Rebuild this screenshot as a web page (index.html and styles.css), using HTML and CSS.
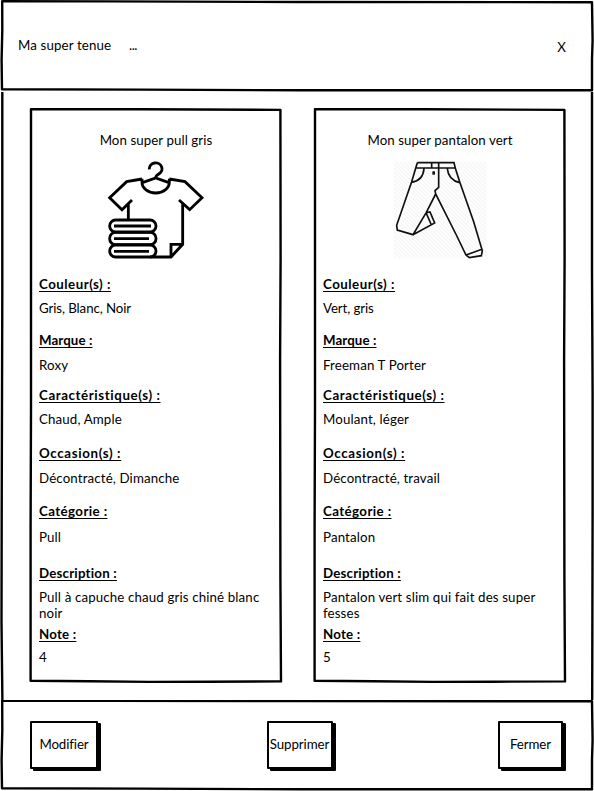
FILE: index.html
```html
<!DOCTYPE html>
<html lang="fr">
<head>
<meta charset="utf-8">
<title>Ma super tenue</title>
<link rel="stylesheet" href="styles.css">
</head>
<body>
<div class="window">
  <header class="header">
    <svg class="sketch" viewBox="0 0 594 92" aria-hidden="true"><path d="M2.2 1.2L107 1.4L300 2L592 2.2L592.6 40L592 60L592 90.3L300 90.3L140 89.6L2 89.2L1.6 60L2.3 30Z"/></svg>
    <h1 class="title">Ma super tenue</h1>
    <span class="more">...</span>
    <span class="close">X</span>
  </header>

  <main class="cards">
    <svg class="sketch" viewBox="0 0 594 608" aria-hidden="true"><path d="M2.3 0L2.3 200L1.7 420L1.5 530L2.4 608M592 0L592 180L592.6 300L592.6 420L592.2 608"/></svg>
    <article class="card">
      <svg class="sketch" viewBox="0 0 254 576" aria-hidden="true"><path d="M2 1.1L110 1.3L251.4 1.9L251.6 150L251.1 250L251.4 470L252 573.4L180 573.7L120 573.9L60 573.3L1.6 572.8L1.6 420L2 300Z"/></svg>
      <h2 class="name">Mon super pull gris</h2>
      <svg class="picture top" viewBox="0 0 360 330" role="img">
        <path d="M163 43A19 18 0 1 1 190 58Q182 62 182 70M142 83L182 69L222 83M141 71V82A41 32 0 0 0 223 82V71M141 72L95 80L44 128L81 164L111 135M100 148V192M223 72L270 80L321 128L284 164L252 135M263 148V268L228 306H165M228 306V268H263"/>
        <rect x="44" y="195" width="139" height="36" rx="18"/>
        <rect x="44" y="232" width="139" height="37" rx="18"/>
        <rect x="44" y="270" width="139" height="36" rx="18"/>
        <path d="M57 213H168M57 251H162M57 289H162"/>
      </svg>
      <dl class="details">
        <dt class="color">Couleur(s) :</dt><dd>Gris, Blanc, Noir</dd>
        <dt class="brand">Marque :</dt><dd>Roxy</dd>
        <dt class="features">Caractéristique(s) :</dt><dd>Chaud, Ample</dd>
        <dt class="occasion">Occasion(s) :</dt><dd>Décontracté, Dimanche</dd>
        <dt class="category">Catégorie :</dt><dd>Pull</dd>
        <dt class="description">Description :</dt><dd>Pull à capuche chaud gris chiné blanc<br>noir</dd>
        <dt class="rating">Note :</dt><dd>4</dd>
      </dl>
    </article>
    <article class="card">
      <svg class="sketch" viewBox="0 0 254 576" aria-hidden="true"><path d="M2 1.1L110 1.3L251.4 1.9L251.6 150L251.1 250L251.4 470L252 573.4L180 573.7L120 573.9L60 573.3L1.6 572.8L1.6 420L2 300Z"/></svg>
      <h2 class="name">Mon super pantalon vert</h2>
      <svg class="picture pants" viewBox="0 0 330 330" role="img">
        <defs><pattern id="hatch" width="12" height="12" patternUnits="userSpaceOnUse"><path class="hatch" d="M0 0L12 12"/></pattern></defs>
        <rect class="paper" x="27" y="20" width="277" height="290"/>
        <rect class="weave" x="27" y="20" width="277" height="290"/>
        <path d="M97 23H207L211 40L225 83L266 200L292 287L289 302L253 308L243 300L214 240L152 117L150 107L161 97V25M97 23L92 40L80 80L35 211L37 225L84 239L124 172L152 117M92 39H211M140 24V38M117 41Q114 77 80 82M187 41Q190 75 224 83M124 173L135 171L149 204L84 239M124 175L138 207M243 300L291 283"/>
        <path class="button-dot" d="M146 49V59"/>
      </svg>
      <dl class="details">
        <dt class="color">Couleur(s) :</dt><dd>Vert, gris</dd>
        <dt class="brand">Marque :</dt><dd>Freeman T Porter</dd>
        <dt class="features">Caractéristique(s) :</dt><dd>Moulant, léger</dd>
        <dt class="occasion">Occasion(s) :</dt><dd>Décontracté, travail</dd>
        <dt class="category">Catégorie :</dt><dd>Pantalon</dd>
        <dt class="description">Description :</dt><dd>Pantalon vert slim qui fait des super<br>fesses</dd>
        <dt class="rating">Note :</dt><dd>5</dd>
      </dl>
    </article>
  </main>

  <footer class="footer">
    <svg class="sketch" viewBox="0 0 594 91" aria-hidden="true"><path d="M2.2 .7L107 .8L300 1L592 1.3L592.6 40L592 60L592 89.3L300 89.3L140 88.6L2 88.2L1.6 60L2.3 30Z"/></svg>
    <button class="button edit">Modifier</button>
    <button class="button delete">Supprimer</button>
    <button class="button dismiss">Fermer</button>
  </footer>
</div>
</body>
</html>
```
FILE: styles.css
```css
* { box-sizing: border-box; }

body {
  margin: 0;
  background: #fff;
  color: #000;
  font: 13.3px/16px Lato, "Open Sans", sans-serif;
  letter-spacing: 0.13px;
}

.window {
  width: 594px;
  height: 791px;
  display: flex;
  flex-direction: column;
  overflow: hidden;
}

.sketch {
  position: absolute;
  inset: 0;
  width: 100%;
  height: 100%;
  fill: none;
  stroke: #000;
  stroke-width: 2.4;
  stroke-linejoin: round;
  pointer-events: none;
}

.header {
  position: relative;
  height: 92px;
  padding: 0 28px 2px 18px;
  display: flex;
  align-items: center;
}

.title, .name {
  margin: 0;
  font-size: inherit;
  font-weight: 400;
}

.title { width: 111px; }
.more { letter-spacing: -0.5px; }
.close { margin-left: auto; padding-top: 3px; }

.cards {
  position: relative;
  height: 608px;
  padding: 16px 27px 0 29px;
  display: flex;
  gap: 30px;
}

.card {
  position: relative;
  width: 254px;
  height: 576px;
  padding: 24px 10px 0;
}

.name {
  text-align: center;
  letter-spacing: 0.07px;
}

.picture {
  display: block;
  height: 110px;
  margin: 7px auto 11px;
  fill: none;
  stroke: #000;
}

.top {
  width: 120px;
  margin-left: 56px;
  stroke-width: 8.5;
}

.pants { width: 110px; stroke: #111; stroke-width: 5; }
.pants .paper { fill: #fdfdfd; stroke: none; }
.pants .weave { fill: url(#hatch); stroke: none; }
.pants .hatch { stroke: #f0f0f0; stroke-width: 2; }
.pants .button-dot { stroke-width: 8; }

.details { margin: 0; }

dt {
  font-weight: 700;
  text-decoration: underline 1px;
  text-underline-offset: 2px;
  text-decoration-skip-ink: none;
}

dd { margin: 8px 0 0; }

.color { letter-spacing: 0.5px; }
.brand { margin-top: 16px; letter-spacing: 0.1px; }
.features { margin-top: 14px; letter-spacing: 0.6px; }
.occasion { margin-top: 18px; letter-spacing: 0.65px; }
.category { margin-top: 17px; letter-spacing: 0.4px; }
.description { margin-top: 20px; letter-spacing: 0.2px; }
.rating { margin-top: 5px; letter-spacing: 0.2px; }
.color + dd { letter-spacing: -0.1px; }
.brand + dd, .occasion + dd { margin-top: 9px; }
.category + dd { margin-top: 10px; }
.rating + dd { margin-top: 7px; }

.footer {
  position: relative;
  height: 91px;
  padding: 21px 31px 0 30px;
  display: flex;
  justify-content: space-between;
  align-items: flex-start;
}

.button {
  height: 48px;
  padding: 0 0 2px;
  border: 2px solid #000;
  border-radius: 1px;
  background: #fff;
  box-shadow: 3px 2px 0 #000;
  color: inherit;
  font: inherit;
  letter-spacing: -0.1px;
  white-space: nowrap;
}

.edit { width: 68px; }
.delete { width: 66px; margin-left: 3px; }
.dismiss { width: 65px; }
```
